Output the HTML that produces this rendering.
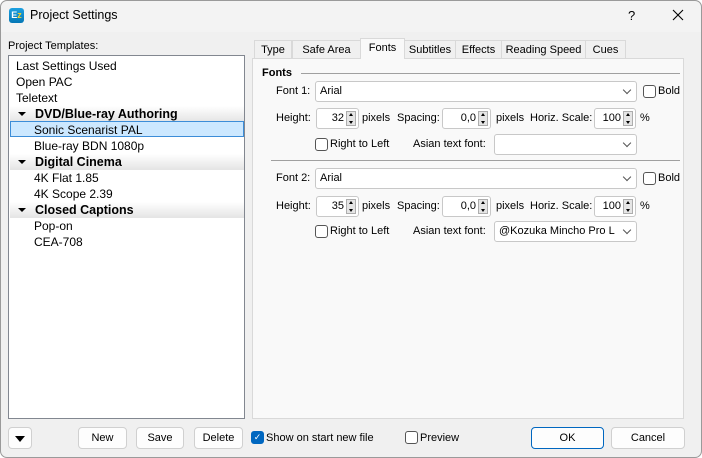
<!DOCTYPE html>
<html><head><meta charset="utf-8"><style>
*{box-sizing:border-box;margin:0;padding:0}
body{width:702px;height:458px;overflow:hidden;background:#fff;font-family:"Liberation Sans",sans-serif;font-size:11px;color:#000;position:relative}
.win{position:absolute;left:0;top:0;width:702px;height:458px;background:#f0f0f0;border-radius:7px;overflow:hidden}
.frame{position:absolute;left:0;top:0;width:702px;height:458px;border:1px solid #9a9a9a;border-radius:7px;z-index:10;pointer-events:none}
.title{position:absolute;left:0;top:0;width:702px;height:32px;background:#f3f3f3}
.a{position:absolute;white-space:nowrap}
.list{position:absolute;left:8px;top:55px;width:237px;height:364px;background:#fff;border:1px solid #828790}
.it{position:absolute;left:7px;font-size:12px;height:16px;line-height:16px}
.sub{left:25px}
.grp{position:absolute;left:1px;width:234px;height:16px;background:linear-gradient(#fff,#e4e4e4);font-weight:bold;font-size:12.5px;line-height:16px;padding-left:25px}
.grp:before{content:"";position:absolute;left:8px;top:6px;border-left:4px solid transparent;border-right:4px solid transparent;border-top:4px solid #000}
.panel{position:absolute;left:252px;top:58px;width:432px;height:361px;background:#f9f9f9;border:1px solid #d9d9d9}
.tab{position:absolute;top:40px;height:19px;border:1px solid #d9d9d9;border-bottom:none;background:#f0f0f0;text-align:center;line-height:18px;font-size:11px}
.tab.sel{top:38px;height:21px;background:#f9f9f9;z-index:2}
.cb{position:absolute;height:21px;background:#fff;border:1px solid #c8c8c8;border-radius:3px;padding-left:4px;line-height:19px}
.cb:after{content:"";position:absolute;right:6px;top:5px;width:5px;height:5px;border-right:1px solid #555;border-bottom:1px solid #555;transform:rotate(45deg)}
.spin{position:absolute;height:21px;background:#fff;border:1px solid #c8c8c8;border-radius:3px;text-align:right;line-height:19px}
.ar{position:absolute;right:2px;top:2px;width:10px;height:15px;background:#e5e5e5;border:1px solid #adadad}
.ar:before{content:"";position:absolute;left:2px;top:1px;border-left:2.5px solid transparent;border-right:2.5px solid transparent;border-bottom:3px solid #000}
.ar:after{content:"";position:absolute;left:2px;bottom:1px;border-left:2.5px solid transparent;border-right:2.5px solid transparent;border-top:3px solid #000}
.chk{position:absolute;width:13px;height:13px;border:1px solid #555;border-radius:3px;background:#fff}
.btn{position:absolute;top:427px;height:22px;background:#fdfdfd;border:1px solid #d0d0d0;border-radius:4px;text-align:center;line-height:20px;font-size:11px}
</style></head><body><div class="win">
<div class="title"></div>
<div class="a" style="left:9px;top:8px;width:15px;height:15px;border-radius:3px;background:linear-gradient(#1da0e0,#0577b5);font-size:9px;font-weight:bold;line-height:15px;text-align:center"><span style="color:#fff">E</span><span style="color:#f7d22a">z</span></div>
<div class="a" style="left:30px;top:8px;font-size:12.5px">Project Settings</div>
<div class="a" style="left:628px;top:8px;font-size:13px">?</div>
<svg class="a" style="left:672px;top:9px" width="12" height="12" viewBox="0 0 12 12"><path d="M1 1L11 11M11 1L1 11" stroke="#000" stroke-width="1.1" fill="none"/></svg>
<div class="a" style="left:8px;top:40px">Project Templates:</div>
<div class="list">
<div class="it" style="top:2px">Last Settings Used</div>
<div class="it" style="top:18px">Open PAC</div>
<div class="it" style="top:34px">Teletext</div>
<div class="grp" style="top:50px">DVD/Blue-ray Authoring</div>
<div class="a" style="left:1px;top:65px;width:234px;height:16px;background:#cce8ff;border:1px solid #3c8dd8"></div>
<div class="it sub" style="top:66px">Sonic Scenarist PAL</div>
<div class="it sub" style="top:82px">Blue-ray BDN 1080p</div>
<div class="grp" style="top:98px">Digital Cinema</div>
<div class="it sub" style="top:114px">4K Flat 1.85</div>
<div class="it sub" style="top:130px">4K Scope 2.39</div>
<div class="grp" style="top:146px">Closed Captions</div>
<div class="it sub" style="top:162px">Pop-on</div>
<div class="it sub" style="top:178px">CEA-708</div>
</div>
<div class="tab" style="left:254px;width:38px">Type</div>
<div class="tab" style="left:292px;width:69px">Safe Area</div>
<div class="tab sel" style="left:360px;width:45px">Fonts</div>
<div class="tab" style="left:404px;width:52px">Subtitles</div>
<div class="tab" style="left:455px;width:47px">Effects</div>
<div class="tab" style="left:501px;width:85px">Reading Speed</div>
<div class="tab" style="left:585px;width:41px">Cues</div>
<div class="panel"></div>
<div class="a" style="left:262px;top:67px;font-weight:bold">Fonts</div>
<div class="a" style="left:301px;top:73px;width:379px;height:1px;background:#a0a0a0"></div>

<div class="a" style="left:276px;top:85px">Font 1:</div>
<div class="cb" style="left:315px;top:81px;width:322px">Arial</div>
<div class="chk" style="left:643px;top:85px"></div><div class="a" style="left:658px;top:85px">Bold</div>
<div class="a" style="left:276px;top:112px">Height:</div>
<div class="spin" style="left:316px;top:108px;width:43px;padding-right:14px">32<div class="ar"></div></div>
<div class="a" style="left:362px;top:112px">pixels</div>
<div class="a" style="left:397px;top:112px">Spacing:</div>
<div class="spin" style="left:442px;top:108px;width:49px;padding-right:14px">0,0<div class="ar"></div></div>
<div class="a" style="left:496px;top:112px">pixels</div>
<div class="a" style="left:530px;top:112px">Horiz. Scale:</div>
<div class="spin" style="left:594px;top:108px;width:42px;padding-right:14px">100<div class="ar"></div></div>
<div class="a" style="left:640px;top:112px">%</div>
<div class="chk" style="left:315px;top:138px"></div><div class="a" style="left:330px;top:138px">Right to Left</div>
<div class="a" style="left:413px;top:138px">Asian text font:</div>
<div class="cb" style="left:494px;top:134px;width:143px"></div>
<div class="a" style="left:271px;top:160px;width:409px;height:1px;background:#a0a0a0"></div>

<div class="a" style="left:276px;top:172px">Font 2:</div>
<div class="cb" style="left:315px;top:168px;width:322px">Arial</div>
<div class="chk" style="left:643px;top:172px"></div><div class="a" style="left:658px;top:172px">Bold</div>
<div class="a" style="left:276px;top:200px">Height:</div>
<div class="spin" style="left:316px;top:196px;width:43px;padding-right:14px">35<div class="ar"></div></div>
<div class="a" style="left:362px;top:200px">pixels</div>
<div class="a" style="left:397px;top:200px">Spacing:</div>
<div class="spin" style="left:442px;top:196px;width:49px;padding-right:14px">0,0<div class="ar"></div></div>
<div class="a" style="left:496px;top:200px">pixels</div>
<div class="a" style="left:530px;top:200px">Horiz. Scale:</div>
<div class="spin" style="left:594px;top:196px;width:42px;padding-right:14px">100<div class="ar"></div></div>
<div class="a" style="left:640px;top:200px">%</div>
<div class="chk" style="left:315px;top:225px"></div><div class="a" style="left:330px;top:225px">Right to Left</div>
<div class="a" style="left:413px;top:225px">Asian text font:</div>
<div class="cb" style="left:494px;top:221px;width:143px">@Kozuka Mincho Pro L</div>

<div class="btn" style="left:8px;width:24px"><span style="position:absolute;left:6px;top:8px;border-left:5px solid transparent;border-right:5px solid transparent;border-top:6px solid #000"></span></div>
<div class="btn" style="left:78px;width:49px">New</div>
<div class="btn" style="left:136px;width:48px">Save</div>
<div class="btn" style="left:194px;width:49px">Delete</div>
<div class="chk" style="left:251px;top:431px;background:#0067c0;border-color:#0067c0;color:#fff;font-size:9px;line-height:11px;text-align:center">✓</div>
<div class="a" style="left:266px;top:432px">Show on start new file</div>
<div class="chk" style="left:405px;top:431px"></div><div class="a" style="left:420px;top:432px">Preview</div>
<div class="btn" style="left:531px;width:73px;border-color:#0067c0">OK</div>
<div class="btn" style="left:611px;width:74px">Cancel</div>
</div><div class="frame"></div></body></html>
